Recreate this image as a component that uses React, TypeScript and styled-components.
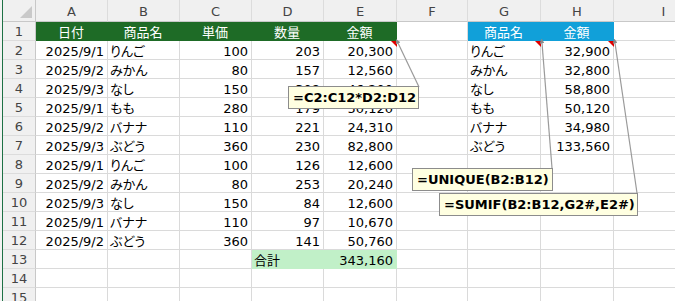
import React from 'react';
import styled, { createGlobalStyle, css } from 'styled-components';

type Fill = 'green' | 'blue' | 'total';
type Align = 'l' | 'r' | 'c';

type CellDef = {
  v?: string;
  a?: Align;
  fill?: Fill;
  note?: boolean;
};

type Note = {
  text: string;
  x: number;
  y: number;
  w: number;
  // where the arrow starts (cell corner) and ends (box corner)
  from: [number, number];
  to: [number, number];
};

const FILLS: Record<Fill, { bg: string; fg: string }> = {
  green: { bg: '#1e6b26', fg: '#ffffff' },
  blue: { bg: '#11a0d9', fg: '#ffffff' },
  total: { bg: '#c1f0c8', fg: '#000000' },
};

const COL_WIDTHS = [33, 72, 72, 72, 72, 73, 71, 73, 73, 100];
const COLS = ['A', 'B', 'C', 'D', 'E', 'F', 'G', 'H', 'I'];
const GRID_LINE = '#dadada';
const FONT = `"DejaVu Sans", "Noto Sans CJK JP", sans-serif`;

const sales: [string, string, string, string, string][] = [
  ['2025/9/1', 'りんご', '100', '203', '20,300'],
  ['2025/9/2', 'みかん', '80', '157', '12,560'],
  ['2025/9/3', 'なし', '150', '308', '46,200'],
  ['2025/9/1', 'もも', '280', '179', '50,120'],
  ['2025/9/2', 'バナナ', '110', '221', '24,310'],
  ['2025/9/3', 'ぶどう', '360', '230', '82,800'],
  ['2025/9/1', 'りんご', '100', '126', '12,600'],
  ['2025/9/2', 'みかん', '80', '253', '20,240'],
  ['2025/9/3', 'なし', '150', '84', '12,600'],
  ['2025/9/1', 'バナナ', '110', '97', '10,670'],
  ['2025/9/2', 'ぶどう', '360', '141', '50,760'],
];

const summary: [string, string][] = [
  ['りんご', '32,900'],
  ['みかん', '32,800'],
  ['なし', '58,800'],
  ['もも', '50,120'],
  ['バナナ', '34,980'],
  ['ぶどう', '133,560'],
];

const notes: Note[] = [
  { text: '=C2:C12*D2:D12', x: 288, y: 86, w: 131, from: [398, 43], to: [419, 87] },
  { text: '=UNIQUE(B2:B12)', x: 412, y: 168, w: 141, from: [542, 43], to: [552, 168] },
  { text: '=SUMIF(B2:B12,G2#,E2#)', x: 439, y: 193, w: 199, from: [615, 43], to: [637, 193] },
];

function buildRows(): CellDef[][] {
  const rows: CellDef[][] = [];
  const head = ['日付', '商品名', '単価', '数量', '金額'].map(
    (v): CellDef => ({ v, a: 'c', fill: 'green' })
  );
  rows.push([
    ...head,
    {},
    { v: '商品名', a: 'c', fill: 'blue' },
    { v: '金額', a: 'c', fill: 'blue' },
    {},
  ]);
  for (let i = 0; i < 14; i++) {
    const s = sales[i];
    const g = summary[i];
    const row: CellDef[] = [];
    if (s) {
      row.push(
        { v: s[0], a: 'r' },
        { v: s[1], a: 'l' },
        { v: s[2], a: 'r' },
        { v: s[3], a: 'r' },
        { v: s[4], a: 'r', note: i === 0 }
      );
    } else if (i === 11) {
      row.push({}, {}, {}, { v: '合計', a: 'l', fill: 'total' }, { v: '343,160', a: 'r', fill: 'total' });
    } else {
      row.push({}, {}, {}, {}, {});
    }
    row.push({});
    if (g) {
      row.push({ v: g[0], a: 'l', note: i === 0 }, { v: g[1], a: 'r', note: i === 0 });
    } else {
      row.push({}, {});
    }
    row.push({});
    rows.push(row);
  }
  return rows;
}

const GlobalStyle = createGlobalStyle`
  html, body {
    margin: 0;
    padding: 0;
    background: #ffffff;
    overflow: hidden;
  }
  body {
    font-family: ${FONT};
  }
`;

const Sheet = styled.div`
  position: relative;
  display: flex;
  width: 675px;
  height: 301px;
  overflow: hidden;
  background: #ffffff;
`;

const LeftStrip = styled.div`
  flex: 0 0 3px;
  box-sizing: border-box;
  border-right: 1px solid #1e7145;
  background: #f3f3f3;
`;

const Grid = styled.div`
  display: grid;
  grid-template-columns: ${COL_WIDTHS.map((w) => `${w}px`).join(' ')};
  grid-template-rows: 22px;
  grid-auto-rows: 19px;
  font-family: ${FONT};
  font-size: 13px;
  font-feature-settings: 'palt';
  color: #000000;
`;

const headerBase = css`
  box-sizing: border-box;
  background: #f0f0f0;
  color: #444444;
  text-align: center;
  white-space: nowrap;
`;

const Corner = styled.div`
  ${headerBase};
  position: relative;
  border-right: 1px solid #c8c8c8;
  border-bottom: 1px solid #c8c8c8;

  &::after {
    content: '';
    position: absolute;
    right: 3px;
    bottom: 3px;
    width: 0;
    height: 0;
    border-left: 12px solid transparent;
    border-bottom: 12px solid #c9c9c9;
  }
`;

const ColHeader = styled.div`
  ${headerBase};
  border-right: 1px solid #dcdcdc;
  border-bottom: 1px solid #c8c8c8;
  padding-top: 2px;
  line-height: 19px;
`;

const RowHeader = styled.div`
  ${headerBase};
  border-right: 1px solid #c8c8c8;
  border-bottom: 1px solid #dcdcdc;
  padding-top: 2px;
  line-height: 16px;
`;

const Cell = styled.div<{ $align: Align; $fill?: Fill; $note?: boolean }>`
  position: relative;
  box-sizing: border-box;
  padding: 2px 3px 0 2px;
  line-height: 17px;
  white-space: nowrap;
  text-align: ${(p) => (p.$align === 'r' ? 'right' : p.$align === 'c' ? 'center' : 'left')};
  background: ${(p) => (p.$fill ? FILLS[p.$fill].bg : '#ffffff')};
  color: ${(p) => (p.$fill ? FILLS[p.$fill].fg : '#000000')};
  border-right: 1px solid ${(p) => (p.$fill ? FILLS[p.$fill].bg : GRID_LINE)};
  border-bottom: 1px solid ${(p) => (p.$fill ? FILLS[p.$fill].bg : GRID_LINE)};

  ${(p) =>
    p.$note &&
    css`
      &::after {
        content: '';
        position: absolute;
        top: 0;
        right: -1px;
        width: 0;
        height: 0;
        border-left: 6px solid transparent;
        border-top: 6px solid #e00000;
      }
    `}
`;

const Arrows = styled.svg`
  position: absolute;
  left: 0;
  top: 0;
  pointer-events: none;
`;

const NoteBox = styled.div<{ $x: number; $y: number; $w: number }>`
  position: absolute;
  left: ${(p) => p.$x}px;
  top: ${(p) => p.$y}px;
  width: ${(p) => p.$w}px;
  height: 23px;
  box-sizing: border-box;
  padding: 1px 0 0 4px;
  background: #ffffe1;
  border: 1px solid #8c8c8c;
  font-family: "DejaVu Sans", sans-serif;
  font-weight: bold;
  font-size: 13px;
  line-height: 19px;
  color: #000000;
  white-space: nowrap;
`;

export default function App() {
  const rows = buildRows();
  return (
    <>
      <GlobalStyle />
      <Sheet>
        <LeftStrip />
        <Grid>
          <Corner />
          {COLS.map((c) => (
            <ColHeader key={c}>{c}</ColHeader>
          ))}
          {rows.map((row, r) => (
            <React.Fragment key={r}>
              <RowHeader>{r + 1}</RowHeader>
              {row.map((cell, c) => (
                <Cell key={c} $align={cell.a ?? 'l'} $fill={cell.fill} $note={cell.note}>
                  {cell.v}
                </Cell>
              ))}
            </React.Fragment>
          ))}
        </Grid>

        <Arrows width={675} height={301}>
          <defs>
            <marker
              id="head"
              viewBox="0 0 10 10"
              refX="1"
              refY="5"
              markerWidth="5"
              markerHeight="5"
              markerUnits="userSpaceOnUse"
              orient="auto-start-reverse"
            >
              <path d="M0,0 L10,5 L0,10 z" fill="#8a8a8a" />
            </marker>
          </defs>
          {notes.map((n) => (
            <line
              key={n.text}
              x1={n.from[0]}
              y1={n.from[1]}
              x2={n.to[0]}
              y2={n.to[1]}
              stroke="#9a9a9a"
              strokeWidth={1.2}
              markerStart="url(#head)"
            />
          ))}
        </Arrows>

        {notes.map((n) => (
          <NoteBox key={n.text} $x={n.x} $y={n.y} $w={n.w}>
            {n.text}
          </NoteBox>
        ))}
      </Sheet>
    </>
  );
}
